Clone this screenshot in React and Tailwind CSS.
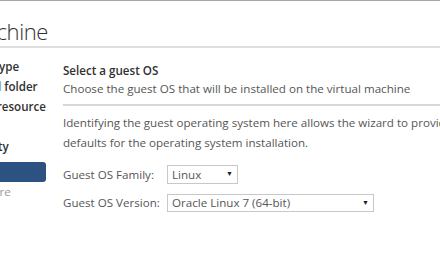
export default function App() {
  const steps = [
    { n: 1, t: "Select a creation type", s: "done" },
    { n: 2, t: "Select a name and folder", s: "done" },
    { n: 3, t: "Select a compute resource", s: "done" },
    { n: 4, t: "Select storage", s: "done" },
    { n: 5, t: "Select compatibility", s: "done" },
    { n: 6, t: "Select a guest OS", s: "active" },
    { n: 7, t: "Customize hardware", s: "todo" },
    { n: 8, t: "Ready to complete", s: "todo" },
  ];
  return (
    <div
      className="w-[440px] h-[264px] overflow-hidden bg-white border-t border-[#a6a6a6] text-[#565656]"
      style={{ fontFamily: '"Open Sans", "Liberation Sans", sans-serif' }}
    >
      <div className="h-[47px] border-b-2 border-[#dedede] pt-[18px]">
        <div className="w-[48px] flex justify-end overflow-hidden">
          <span className="whitespace-nowrap text-[22px] tracking-[-0.4px] font-light text-[#313131] leading-[24px]">
            New Virtual Machine
          </span>
        </div>
      </div>
      <div className="flex">
        <div className="w-[63px] shrink-0 overflow-hidden pt-[9px]">
          <div className="ml-[-129px] w-[175px] flex flex-col">
            {steps.map((st) => (
              <div
                key={st.n}
                className={
                  "h-[20px] flex items-center whitespace-nowrap text-[11.6px] pl-[14px] " +
                  (st.s === "active"
                    ? "bg-[#2b5280] text-white font-semibold rounded-[3px] mt-[5px]"
                    : st.s === "done"
                    ? "text-[#313131] font-semibold"
                    : "text-[#9a9a9a]")
                }
              >
                <span className="w-[14px]">{st.n}</span>
                {st.t}
              </div>
            ))}
          </div>
        </div>
        <div className="flex-1 pt-[15px] text-[11.6px]">
          <div className="font-semibold text-[#313131] leading-[16px]">Select a guest OS</div>
          <div className="leading-[18px] pt-[1px] pb-[6px] border-b-2 border-[#d7d7d7] whitespace-nowrap">
            Choose the guest OS that will be installed on the virtual machine
          </div>
          <div className="pt-[7px] leading-[20px] whitespace-nowrap">
            <div>Identifying the guest operating system here allows the wizard to provide the appropriate</div>
            <div>defaults for the operating system installation.</div>
          </div>
          <div className="mt-[12px] flex items-center h-[19px]">
            <span className="w-[104px]">Guest OS Family:</span>
            <div className="w-[71px] h-[19px] border border-[#c8c8c8] flex items-center justify-between px-[4px]">
              <span>Linux</span>
              <span className="text-[7px] text-[#222]">▼</span>
            </div>
          </div>
          <div className="mt-[10px] flex items-center h-[18px]">
            <span className="w-[104px]">Guest OS Version:</span>
            <div className="w-[207px] h-[18px] border border-[#c8c8c8] flex items-center justify-between px-[4px]">
              <span>Oracle Linux 7 (64-bit)</span>
              <span className="text-[7px] text-[#222]">▼</span>
            </div>
          </div>
        </div>
      </div>
    </div>
  );
}
